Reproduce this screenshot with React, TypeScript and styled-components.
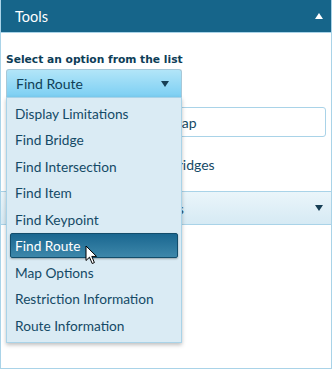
import styled, { createGlobalStyle } from "styled-components";

const GlobalStyle = createGlobalStyle`
  html, body {
    margin: 0;
    padding: 0;
    background: #ffffff;
  }
  body {
    font-family: "Lato", "Liberation Sans", sans-serif;
  }
`;

const Panel = styled.div`
  position: relative;
  width: 332px;
  height: 369px;
  box-sizing: border-box;
  border: 1px solid #a9d3e8;
  border-top: 0;
  background: #ffffff;
  overflow: hidden;
`;

const PanelHeader = styled.div`
  display: flex;
  align-items: center;
  justify-content: space-between;
  height: 33px;
  padding: 0 8px 0 14px;
  background-color: #16658a;
  border-bottom: 1px solid #a9d3e8;
  color: #ffffff;
  font-size: 14.5px;
  box-sizing: border-box;
`;

const Caret = styled.span<{ up?: boolean; color: string }>`
  width: 0;
  height: 0;
  border-left: 4px solid transparent;
  border-right: 4px solid transparent;
  ${(p) =>
    p.up
      ? `border-bottom: 6px solid ${p.color};`
      : `border-top: 6px solid ${p.color};`}
`;

const Body = styled.div<{ top?: number }>`
  display: flex;
  flex-direction: column;
  padding: ${(p) => p.top ?? 0}px 3px 0 5px;
`;

const Label = styled.div`
  font-family: "DejaVu Sans", "Verdana", sans-serif;
  font-weight: bold;
  font-size: 10.7px;
  color: #0d3d57;
  line-height: 14px;
  margin-bottom: 2px;
  white-space: nowrap;
`;

const SelectWrap = styled.div`
  position: relative;
  width: 176px;
  z-index: 5;
`;

const SelectBox = styled.div`
  display: flex;
  align-items: center;
  justify-content: space-between;
  height: 28px;
  box-sizing: border-box;
  padding: 0 12px 0 9px;
  border: 1px solid #a7c8d8;
  border-bottom: 0;
  border-radius: 3px 3px 0 0;
  background: linear-gradient(#b2e5f8, #7ccff3);
  color: #0f3f57;
  font-size: 14px;
`;

const List = styled.div`
  position: absolute;
  top: 100%;
  left: 0;
  width: 176px;
  box-sizing: border-box;
  padding: 3px 3px 4px 3px;
  display: flex;
  flex-direction: column;
  gap: 1.45px;
  background: #daebf4;
  border: 1px solid #a9d3e8;
  box-shadow: 0 2px 4px rgba(0, 0, 0, 0.25);
`;

const Item = styled.div<{ active?: boolean }>`
  position: relative;
  height: 25px;
  display: flex;
  align-items: center;
  padding-left: 5px;
  box-sizing: border-box;
  border-radius: 2px;
  font-size: 13.7px;
  color: ${(p) => (p.active ? "#ffffff" : "#144a66")};
  ${(p) =>
    p.active &&
    `
    background: linear-gradient(#1a6790, #3d87aa);
    border: 1px solid #124d6b;
    padding-left: 4px;
    box-shadow: 0 1px 2px rgba(0,0,0,0.3);
  `}
`;

const Cursor = styled.svg`
  position: absolute;
  left: 74px;
  top: 11px;
`;

const TextInput = styled.div`
  margin-top: 10px;
  height: 30px;
  box-sizing: border-box;
  border: 1px solid #a9d3e8;
  border-radius: 3px;
  display: flex;
  align-items: center;
  padding-left: 4px;
  font-size: 14px;
  color: #144a66;
  margin-right: 2px;
  white-space: nowrap;
`;

const CheckRow = styled.div`
  height: 54px;
  display: flex;
  align-items: center;
  gap: 4px;
  padding-left: 0;
  font-size: 14px;
  color: #144a66;
  white-space: nowrap;
`;

const CheckBox = styled.span`
  width: 12px;
  height: 12px;
  border: 1px solid #7fa9bd;
  border-radius: 2px;
  background: #ffffff;
`;

const Section = styled.div`
  display: flex;
  align-items: center;
  justify-content: space-between;
  height: 34px;
  box-sizing: border-box;
  padding: 0 8px 0 14px;
  border-top: 1px solid #a9d3e8;
  border-bottom: 1px solid #a9d3e8;
  background: linear-gradient(#eaf5fa, #d6eaf4);
  color: #144a66;
  font-size: 14px;
  white-space: nowrap;
`;

const options = [
  "Display Limitations",
  "Find Bridge",
  "Find Intersection",
  "Find Item",
  "Find Keypoint",
  "Find Route",
  "Map Options",
  "Restriction Information",
  "Route Information",
];

export default function App() {
  const selected = "Find Route";
  return (
    <>
      <GlobalStyle />
      <Panel>
        <PanelHeader>
          <span>Tools</span>
          <Caret up color="#ffffff" />
        </PanelHeader>
        <Body top={20}>
          <Label>Select an option from the list</Label>
          <SelectWrap>
            <SelectBox>
              <span>{selected}</span>
              <Caret color="#173f55" />
            </SelectBox>
            <List>
              {options.map((o) => (
                <Item key={o} active={o === selected}>
                  {o}
                  {o === selected && (
                    <Cursor width="13" height="20" viewBox="0 0 13 20">
                      <path
                        d="M1 1 L1 15.5 L4.5 12.2 L7.2 18.5 L9.4 17.6 L6.8 11.4 L11.5 11.4 Z"
                        fill="#ffffff"
                        stroke="#000000"
                        strokeWidth="1"
                      />
                    </Cursor>
                  )}
                </Item>
              ))}
            </List>
          </SelectWrap>
        </Body>
        <Body>
          <TextInput>Click on a location on the map</TextInput>
          <CheckRow>
            <CheckBox />
            <span>Avoid weight restricted bridges</span>
          </CheckRow>
        </Body>
        <Section>
          <span>Route Planning Preferences</span>
          <Caret color="#173f55" />
        </Section>
      </Panel>
    </>
  );
}
